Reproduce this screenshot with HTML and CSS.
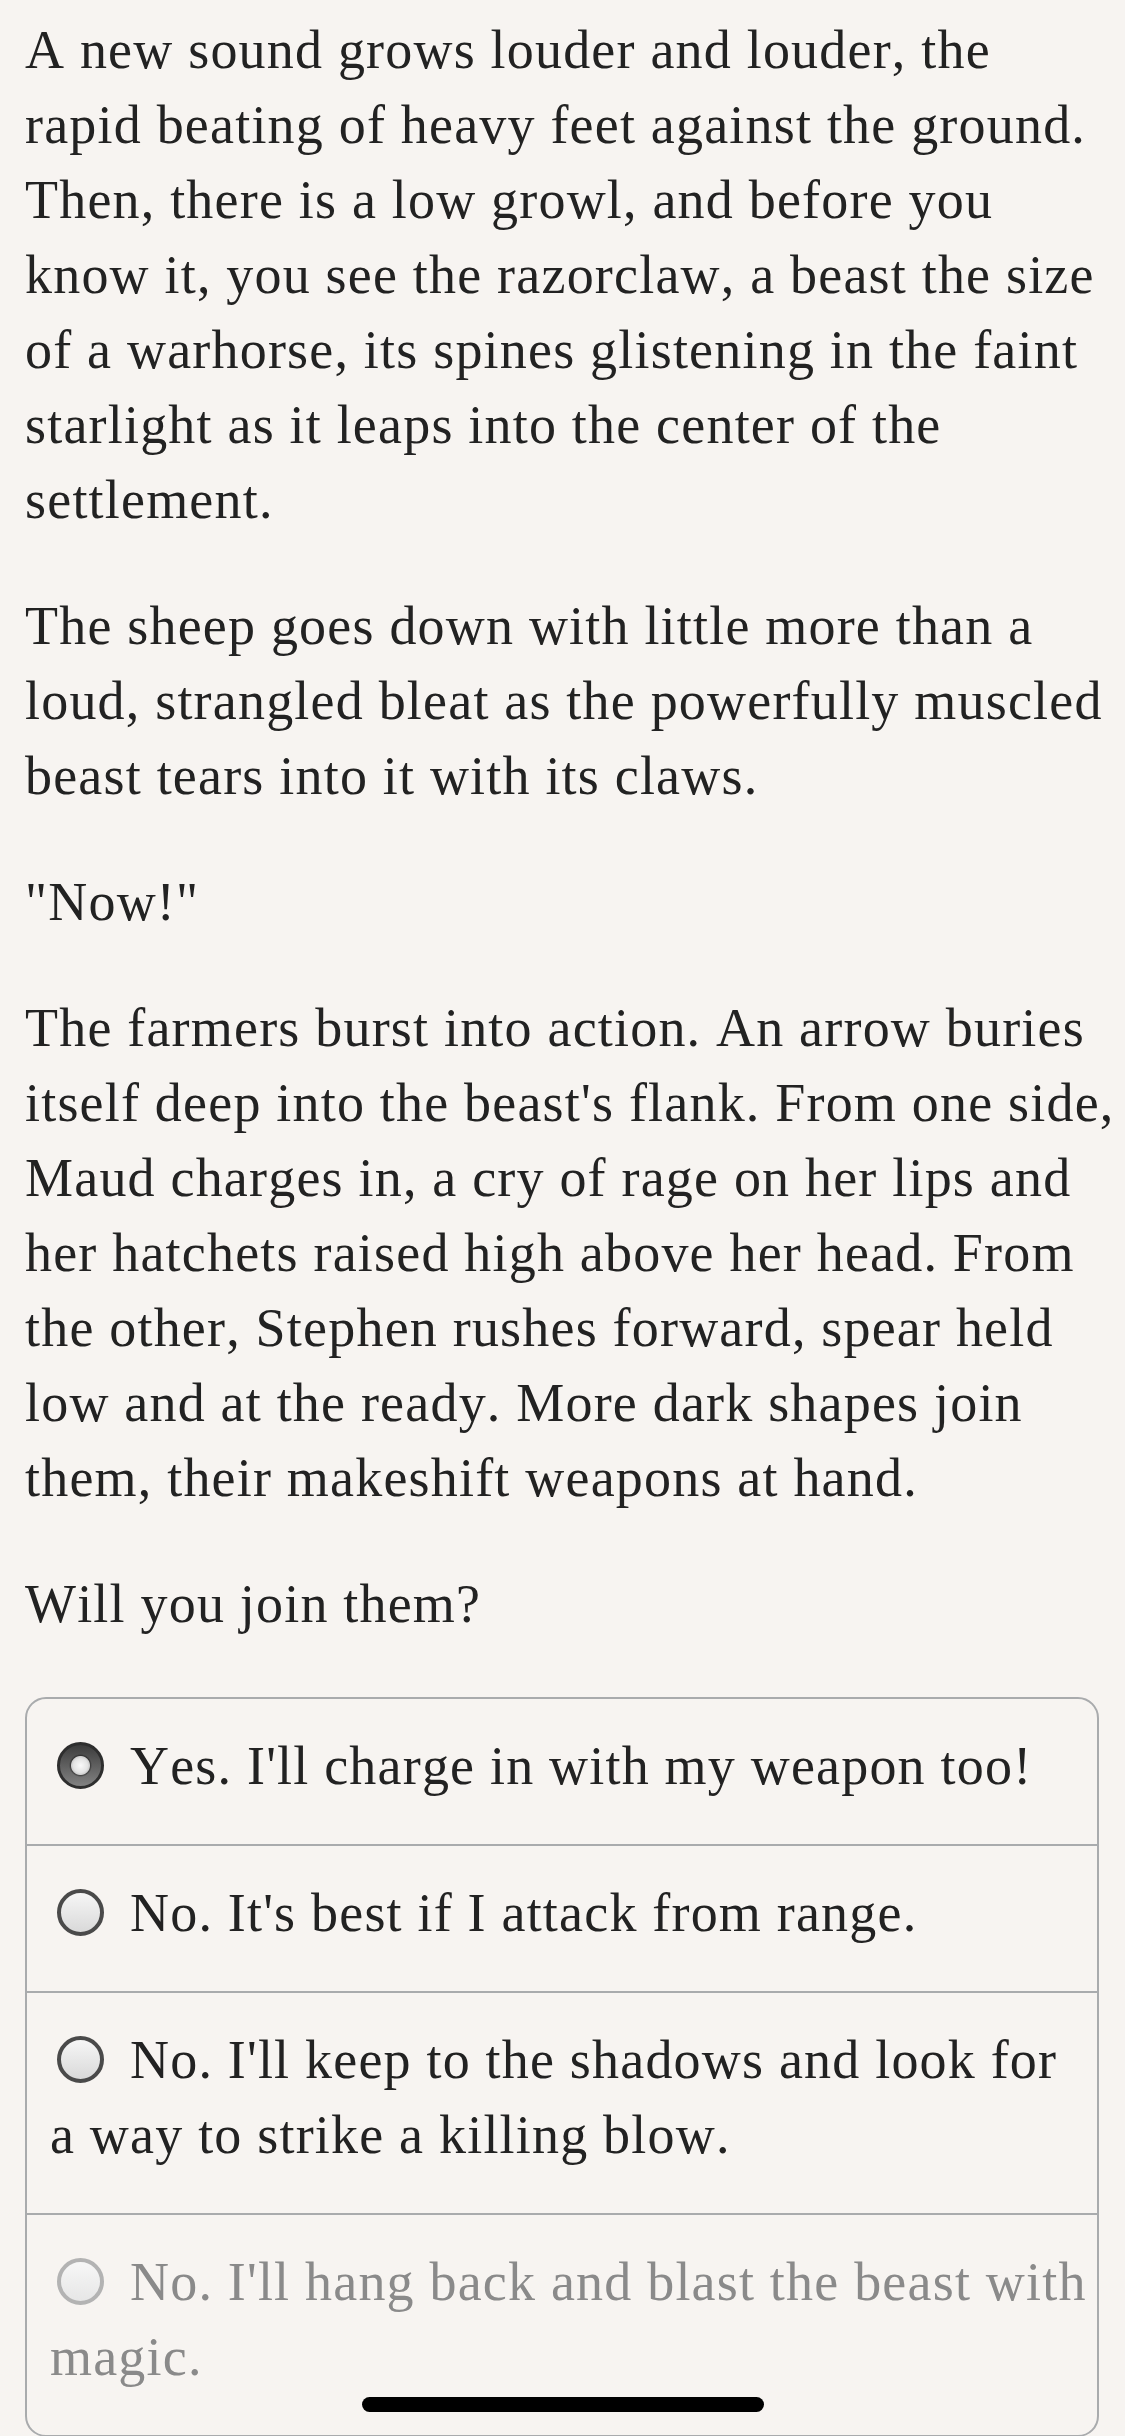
FILE: index.html
```html
<!DOCTYPE html>
<html lang="en">
<head>
    <meta charset="UTF-8">
    <meta name="viewport" content="width=device-width, initial-scale=1.0">
    <title>The Razorclaw</title>
    <link rel="stylesheet" href="styles.css">
</head>
<body>

<div class="story">
    <p>A new sound grows louder and louder, the rapid beating of heavy feet against the ground. Then, there is a low growl, and before you know it, you see the razorclaw, a beast the size of a warhorse, its spines glistening in the faint starlight as it leaps into the center of the settlement.</p>

    <p>The sheep goes down with little more than a loud, strangled bleat as the powerfully muscled beast tears into it with its claws.</p>

    <p>"Now!"</p>

    <p>The farmers burst into action. An arrow buries itself deep into the beast's flank. From one side, Maud charges in, a cry of rage on her lips and her hatchets raised high above her head. From the other, Stephen rushes forward, spear held low and at the ready. More dark shapes join them, their makeshift weapons at hand.</p>

    <p>Will you join them?</p>
</div>

<form class="choices">
    <label class="choice"><input type="radio" name="choice" checked>Yes. I'll charge in with my weapon too!</label>
    <label class="choice"><input type="radio" name="choice">No. It's best if I attack from range.</label>
    <label class="choice"><input type="radio" name="choice">No. I'll keep to the shadows and look for a way to strike a killing blow.</label>
    <label class="choice disabled"><input type="radio" name="choice" disabled>No. I'll hang back and blast the beast with magic.</label>
</form>

<div class="home-indicator"></div>

</body>
</html>
```

FILE: styles.css
```css
body {
    font-family: "Liberation Serif", "Times New Roman", serif;
    font-size: 54px;
    line-height: 75px;
    letter-spacing: 1.2px;
    font-kerning: none;
    color: #222;
    background-color: #f7f4f1;
    margin: 0;
    padding: 13px 7px 0 25px;
}

.story p {
    margin: 0 0 51px;
}

.story p:last-child {
    margin-bottom: 55px;
}

.choices {
    margin: 0 19px 0 0;
    border: 2px solid #a9abad;
    border-radius: 21px;
    overflow: hidden;
}

.choice {
    display: block;
    padding: 30px 6px 40px 23px;
    border-top: 2px solid #a9abad;
}

.choice:first-child {
    border-top: none;
}

.choice input {
    -webkit-appearance: none;
    appearance: none;
    width: 47px;
    height: 47px;
    margin: 0 26px 0 7px;
    vertical-align: -5px;
    border: 4px solid #4a4a4a;
    border-radius: 50%;
    box-sizing: border-box;
    background: linear-gradient(#f6f6f6, #d9d9d9);
}

.choice input:checked {
    border: 3px solid #2e2e2e;
    background:
        radial-gradient(circle at 50% 50%, #fafafa 0, #e4e4e4 7px, #cfcfcf 9px, rgba(0, 0, 0, 0.35) 10px, transparent 11.5px),
        linear-gradient(#3c3c3c, #828282);
}

.choice.disabled {
    color: #8a8a8a;
}

.choice.disabled input {
    border-color: #b3b3b3;
    background: linear-gradient(#f7f7f7, #e6e6e6);
}

.home-indicator {
    position: fixed;
    left: 362px;
    bottom: 24px;
    width: 402px;
    height: 15px;
    border-radius: 8px;
    background-color: #000;
}
```
